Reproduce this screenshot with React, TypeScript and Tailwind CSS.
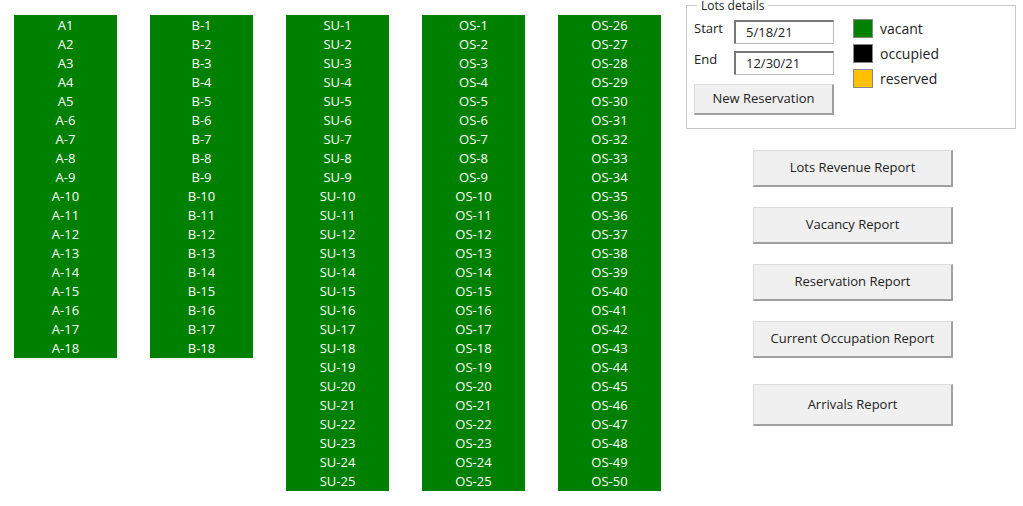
import React from "react";

const col = (labels: string[]) => (
  <div className="w-[103px] bg-[#008000] flex flex-col pt-[1px]">
    {labels.map((l) => (
      <div key={l} className="h-[19px] leading-[19px] text-center text-white text-[13px]">{l}</div>
    ))}
  </div>
);

const range = (n: number, f: (i: number) => string, start = 1) =>
  Array.from({ length: n }, (_, i) => f(i + start));

const Btn = ({ children, h = "h-[37px]" }: { children: React.ReactNode; h?: string }) => (
  <div className={`w-[200px] ${h} bg-[#f0f0f0] border border-[#dcdcdc] border-r-[#a0a0a0] border-b-[#a0a0a0] border-r-2 border-b-2 flex items-center justify-center text-[13px] text-[#222]`}>
    {children}
  </div>
);

export default function App() {
  const a = [...range(5, (i) => `A${i}`), ...range(13, (i) => `A-${i}`, 6)];
  const b = range(18, (i) => `B-${i}`);
  const su = range(25, (i) => `SU-${i}`);
  const os1 = range(25, (i) => `OS-${i}`);
  const os2 = range(25, (i) => `OS-${i}`, 26);
  return (
    <div className="w-[1023px] h-[506px] bg-white flex items-start pl-[14px] pt-[15px]" style={{ fontFamily: '"Open Sans", "Liberation Sans", sans-serif' }}>
      <div className="flex items-start gap-[33px]">
        {col(a)}{col(b)}{col(su)}{col(os1)}{col(os2)}
      </div>
      <div className="ml-[25px] -mt-[10px] flex flex-col">
        <div className="relative w-[330px] h-[124px] border border-[#c8c8c8] text-[13px] text-[#222]">
          <div className="absolute -top-[6px] left-[10px] bg-white px-[4px] text-[12px] leading-[12px]">Lots details</div>
          <div className="flex pl-[7px] pt-[14px]">
            <div className="flex flex-col">
              <div className="flex items-center">
                <span className="w-[40px] -mt-[6px]">Start</span>
                <div className="w-[100px] h-[24px] border border-[#bbb] border-l-[#777] border-t-[#777] border-l-2 border-t-2 pl-[10px] leading-[20px]">5/18/21</div>
              </div>
              <div className="flex items-center mt-[7px]">
                <span className="w-[40px] -mt-[6px]">End</span>
                <div className="w-[100px] h-[24px] border border-[#bbb] border-l-[#777] border-t-[#777] border-l-2 border-t-2 pl-[10px] leading-[20px]">12/30/21</div>
              </div>
              <div className="mt-[9px] w-[140px] h-[31px] bg-[#f0f0f0] border border-[#dcdcdc] border-r-[#a0a0a0] border-b-[#a0a0a0] border-r-2 border-b-2 flex items-center justify-center">New Reservation</div>
            </div>
            <div className="ml-[19px] flex flex-col gap-[6px] -mt-[1px]">
              {[["#008000", "vacant"], ["#000000", "occupied"], ["#ffc000", "reserved"]].map(([c, t]) => (
                <div key={t} className="flex items-center h-[19px]">
                  <div className="w-[20px] h-[19px] border border-[#888]" style={{ background: c }} />
                  <span className="ml-[7px] text-[14px] leading-[19px]">{t}</span>
                </div>
              ))}
            </div>
          </div>
        </div>
        <div className="ml-[67px] mt-[21px] flex flex-col">
          <Btn>Lots Revenue Report</Btn>
          <div className="mt-[20px]"><Btn>Vacancy Report</Btn></div>
          <div className="mt-[20px]"><Btn>Reservation Report</Btn></div>
          <div className="mt-[20px]"><Btn>Current Occupation Report</Btn></div>
          <div className="mt-[26px]"><Btn h="h-[42px]">Arrivals Report</Btn></div>
        </div>
      </div>
    </div>
  );
}
